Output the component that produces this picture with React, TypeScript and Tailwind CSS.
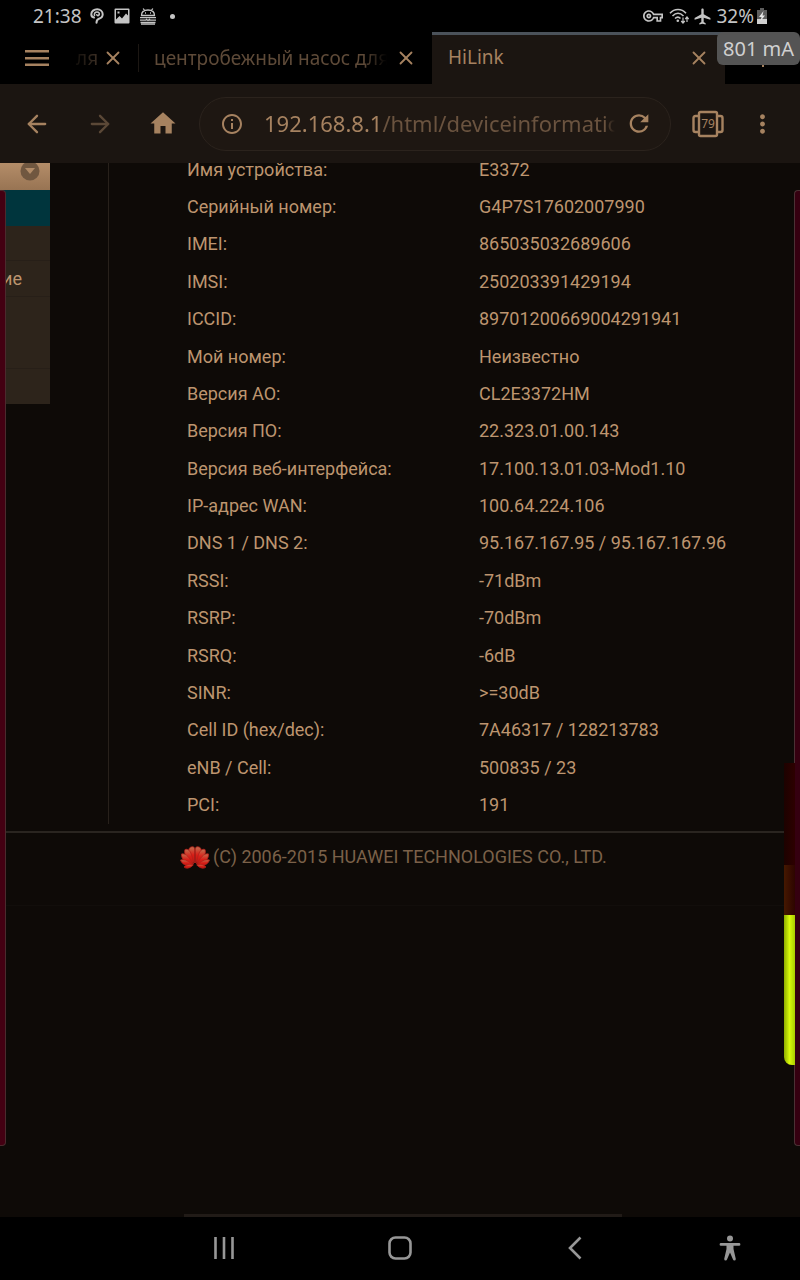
import type { ReactNode } from "react";
import { MdHome, MdRefresh, MdMoreVert, MdOutlineInfo, MdAirplanemodeActive, MdOutlineVpnKey } from "react-icons/md";
import { ArrowLeft, ArrowRight, X } from "lucide-react";

const info = [
  ["Имя устройства:", "E3372"],
  ["Серийный номер:", "G4P7S17602007990"],
  ["IMEI:", "865035032689606"],
  ["IMSI:", "250203391429194"],
  ["ICCID:", "89701200669004291941"],
  ["Мой номер:", "Неизвестно"],
  ["Версия АО:", "CL2E3372HM"],
  ["Версия ПО:", "22.323.01.00.143"],
  ["Версия веб-интерфейса:", "17.100.13.01.03-Mod1.10"],
  ["IP-адрес WAN:", "100.64.224.106"],
  ["DNS 1 / DNS 2:", "95.167.167.95 / 95.167.167.96"],
  ["RSSI:", "-71dBm"],
  ["RSRP:", "-70dBm"],
  ["RSRQ:", "-6dB"],
  ["SINR:", ">=30dB"],
  ["Cell ID (hex/dec):", "7A46317 / 128213783"],
  ["eNB / Cell:", "500835 / 23"],
  ["PCI:", "191"],
];

function IconButton({ label, className = "", children }: { label: string; className?: string; children: ReactNode }) {
  return (
    <button type="button" aria-label={label} className={`flex shrink-0 items-center justify-center ${className}`}>
      {children}
    </button>
  );
}

function StatusBar() {
  return (
    <header className="flex h-8 shrink-0 items-center justify-between pl-[33px] pr-8 text-[#c4c4c4]">
      <div className="flex items-center">
        <span className="w-[57px] text-[19px]">21:38</span>
        <svg className="mr-2.5 h-4 w-3.5" viewBox="0 0 14 16" fill="none" stroke="currentColor" strokeWidth="2" strokeLinecap="round">
          <path d="M6.500 14.800C6.500 12.500 7 11.500 9 10.800C11.500 10 12.700 8.300 12.700 6.300C12.700 3.300 10.300 1.200 7.200 1.200C4 1.200 1.300 3.300 1.300 6.200C1.300 8 2.300 9.200 4 9.500" />
          <path d="M4.500 7.500C4 5.500 5 4 7 4C9 4 9.700 5.500 9.200 6.700C8.700 7.800 7.300 8 6.800 6.800" strokeWidth="1.600" />
        </svg>
        <svg className="mr-2.5 h-4 w-4" viewBox="0 0 16 16" fill="currentColor">
          <path fillRule="evenodd" d="M1.500 0.500h13a1 1 0 0 1 1 1v13a1 1 0 0 1-1 1h-13a1 1 0 0 1-1-1v-13a1 1 0 0 1 1-1ZM2 11.500L5.500 8l2.500 2.500L12 5.500l2 2V2H2ZM3.500 3.500h2v2h-2Z" />
        </svg>
        <svg className="mr-3.5 h-[17px] w-4" viewBox="0 0 16 17" fill="none" stroke="currentColor" strokeWidth="1.300">
          <path d="M1.500 7.500C1.500 3.800 4.500 2 8 2s6.500 1.800 6.500 5.500ZM4.500 2.500L3.200 0.500M11.500 2.500L12.800 0.500M5 5h1M10 5h1M0 9.700h16M0 12.200h6.500M9 12.200h7M6 11l2 1.500l2-1.500M0.500 14.500h15M1 16.200h14" />
        </svg>
        <span className="size-[5px] rounded-full bg-[#c4c4c4]" />
      </div>
      <div className="flex items-center">
        <MdOutlineVpnKey className="mr-1.5 size-5" />
        <svg className="mr-1 h-4 w-5" viewBox="0 0 20 16" fill="none" stroke="currentColor" strokeWidth="1.600">
          <path d="M1 5.200C5.500 0.300 12.500 0.300 17 5.200M3.500 8C7 4.500 11 4.500 14.500 8M6 10.500C7.700 9 10 9 11.500 10.500" />
          <circle cx="8.800" cy="12.800" r="1.300" fill="currentColor" stroke="none" />
          <path d="M14 9.500v5M12.200 13l1.800 2l1.800-2M18 14V9M16.300 11L18 9l1.700 2" strokeWidth="1.200" />
        </svg>
        <MdAirplanemodeActive className="mr-1 size-[19px]" />
        <span className="mr-0.5 text-[19px]">32%</span>
        <svg className="h-4 w-3" viewBox="0 0 12 16">
          <path d="M4 0h4v2h3v14H1V2h3Z" fill="#5d5d5d" />
          <path d="M1 11h10v5H1Z" fill="#d0d0d0" />
          <path d="M7.500 3L3 9h2.500L4.500 13L9 7.500H6.500Z" fill="#e6e6e6" />
        </svg>
      </div>
    </header>
  );
}

function TabStrip() {
  return (
    <nav className="relative flex h-[52px] shrink-0 items-center text-[19px] text-[#a68260]">
      <IconButton label="Меню" className="ml-[22px] w-[30px]">
        <svg className="h-5 w-6" viewBox="0 0 24 20" fill="currentColor">
          <path d="M0 2h24v2.500H0ZM0 9h24v2.500H0ZM0 15.500h24V18H0Z" />
        </svg>
      </IconButton>
      <div className="ml-6 flex h-7 w-[62px] shrink-0 items-center justify-between pr-3.5">
        <span className="bg-linear-to-r from-[#14100c] to-[#3d3025] bg-clip-text text-transparent">ля</span>
        <IconButton label="Закрыть">
          <X className="size-[22px]" strokeWidth={2} />
        </IconButton>
      </div>
      <div className="flex h-7 min-w-0 flex-1 items-center border-l border-[#1c1713] pl-[15px]">
        <span className="min-w-0 flex-1 overflow-hidden whitespace-nowrap text-[#5e4a38] mask-r-from-90%">
          центробежный насос для
        </span>
        <IconButton label="Закрыть" className="ml-2 mr-[15px]">
          <X className="size-[22px]" strokeWidth={2} />
        </IconButton>
      </div>
      <div className="flex h-full w-[293px] shrink-0 items-center justify-between border-t-[3px] border-[#4b525a] bg-[#1b1511] pb-1 pl-4 pr-[15px]">
        <span>HiLink</span>
        <IconButton label="Закрыть">
          <X className="size-[22px]" strokeWidth={2} />
        </IconButton>
      </div>
      <IconButton label="Новая вкладка" className="w-[75px] pt-1">
        <span className="h-3.5 w-0.5 bg-[#a68260]" />
      </IconButton>
      <div className="absolute right-0 top-0 rounded-md bg-[#545454] px-1.5 text-xl leading-[33px] text-[#d0d0d0]">801 mA</div>
    </nav>
  );
}

function Toolbar() {
  return (
    <div className="flex h-[79px] shrink-0 items-center bg-[#1b1511] px-[23px] text-[#a68260]">
      <IconButton label="Назад" className="w-7">
        <ArrowLeft className="size-8" />
      </IconButton>
      <IconButton label="Вперёд" className="ml-[35px] w-7 text-[#5b4837]">
        <ArrowRight className="size-8" />
      </IconButton>
      <IconButton label="Домой" className="ml-[34px] w-[30px]">
        <MdHome className="size-[31px]" />
      </IconButton>
      <div className="ml-[21px] flex h-[54px] min-w-0 flex-1 items-center rounded-full border border-[#2b231d] bg-[#1e1712] pl-5 pr-[17px]">
        <MdOutlineInfo className="size-6 shrink-0" />
        <div
          role="textbox"
          aria-label="Адрес"
          className="ml-5 min-w-0 flex-1 overflow-hidden whitespace-nowrap text-[22px] text-[#6a533f] mask-r-from-97%"
        >
          <span className="text-[#a68260]">192.168.8.1</span>/html/deviceinformation.html
        </div>
        <IconButton label="Обновить" className="ml-2.5 w-7">
          <MdRefresh className="size-[31px]" />
        </IconButton>
      </div>
      <IconButton label="Вкладки" className="ml-[21px]">
        <svg className="h-7 w-8" viewBox="0 0 32 28" fill="none" stroke="currentColor" strokeWidth="2.400">
          <rect x="7" y="2" width="18" height="24" rx="1.500" />
          <path d="M7 6H3.500Q1.500 6 1.500 8v12q0 2 2 2H7M25 6h3.500q2 0 2 2v12q0 2-2 2H25" />
          <text x="16" y="18" textAnchor="middle" fontSize="12" fill="currentColor" stroke="none">79</text>
        </svg>
      </IconButton>
      <IconButton label="Ещё" className="ml-6 w-[29px]">
        <MdMoreVert className="size-8" />
      </IconButton>
    </div>
  );
}

function Sidebar() {
  return (
    <aside className="w-[50px] shrink-0 overflow-hidden text-lg leading-9 text-[#bd956f]">
      <div className="flex h-[27px] items-start justify-end bg-linear-to-b from-[#b48d69] to-[#987453] pr-2.5">
        <svg className="h-[18px] w-5" viewBox="0 0 20 18">
          <circle cx="10" cy="8" r="9.500" fill="#705740" />
          <path d="M5 5h10l-5 6Z" fill="#b18b68" />
        </svg>
      </div>
      <div className="h-9 bg-[#00353d]" />
      <div className="divide-y divide-[#271f18] bg-[#2d241b]">
        <div className="h-[35px]" />
        <a href="#" className="block h-9 pl-0.5">ие</a>
        <div className="h-[72px]" />
        <div className="h-[35px]" />
      </div>
    </aside>
  );
}

function HuaweiLogo() {
  return (
    <svg className="h-6 w-[30px] shrink-0" viewBox="0 0 30 24">
      <defs>
        <linearGradient id="petal" x1="0" y1="0" x2="0" y2="1">
          <stop offset="0" stopColor="#c07050" />
          <stop offset="0.500" stopColor="#d91f18" />
          <stop offset="1" stopColor="#b8160f" />
        </linearGradient>
      </defs>
      <g fill="url(#petal)" stroke="#b3201a" strokeWidth="0.800">
        <path d="M14.500 18C8.500 11 7.500 5 10 2.500C13 0.800 15 2 14.800 5Z" />
        <path d="M15.500 18C21.500 11 22.500 5 20 2.500C17 0.800 15 2 15.200 5Z" />
        <path d="M13.500 19C6 13 3.500 8 5 4.500C9.500 3 12 8 13.500 19Z" />
        <path d="M16.500 19C24 13 26.500 8 25 4.500C20.500 3 18 8 16.500 19Z" />
        <path d="M13 20C5.500 18.500 1 14 1.500 9C6.500 8 10 13 13 20Z" />
        <path d="M17 20C24.500 18.500 29 14 28.500 9C23.500 8 20 13 17 20Z" />
        <path d="M13 20.500C7 22 2 19.500 0.500 15C5 14 9 16 13 20.500Z" />
        <path d="M17 20.500C23 22 28 19.500 29.500 15C25 14 21 16 17 20.500Z" />
        <path d="M13 20C10 23.500 6 24 4 22C7 19 10 19 13 20Z" />
        <path d="M17 20C20 23.500 24 24 26 22C23 19 20 19 17 20Z" />
      </g>
    </svg>
  );
}

function DeviceInfo() {
  return (
    <main className="relative flex-1 overflow-hidden bg-[#0e0a07] font-[Roboto,sans-serif] text-[#bd956f]">
      <div className="flex items-start">
        <Sidebar />
        <section className="ml-[58px] min-w-0 flex-1 overflow-hidden border-l border-[#28211b] pl-[78px]">
          <table className="-mt-3 h-[673px] w-full table-fixed text-left text-lg leading-6">
            <tbody>
              {info.map(([label, value]) => (
                <tr key={label}>
                  <th scope="row" className="w-[292px] p-0 font-normal">{label}</th>
                  <td className="whitespace-nowrap p-0">{value}</td>
                </tr>
              ))}
            </tbody>
          </table>
        </section>
      </div>
      <footer className="mt-[7px] flex h-[75px] items-start gap-[3px] border-b border-t-2 border-b-[#120e0b] border-t-[#2a2520] pl-[180px] pt-3 text-lg leading-6 text-[#7b6149]">
        <HuaweiLogo />
        <span>(C) 2006-2015 HUAWEI TECHNOLOGIES CO., LTD.</span>
      </footer>

      {/* edge panels */}
      <div className="absolute bottom-[71px] left-0 top-[27px] w-1.5 rounded-r-sm border border-l-0 border-[#4b2a2d] bg-[#430012]" />
      <div className="absolute bottom-[71px] right-0 top-[27px] w-1.5 rounded-l-sm border border-r-0 border-[#4b3134] bg-[#350010]" />
      <div className="absolute bottom-[152px] right-[5px] flex h-[302px] w-[11px] flex-col overflow-hidden rounded-bl-lg">
        <div className="h-[102px] bg-linear-to-r from-[#1d0200] to-[#2d0000]" />
        <div className="h-[50px] bg-linear-to-r from-[#451800] to-[#2d0500]" />
        <div className="flex-1 bg-linear-to-r from-[#8fae00] via-[#d9fa0a] to-[#a9cb00]" />
      </div>
      {/* horizontal scroll position */}
      <div className="absolute bottom-0 left-[23%] right-[178px] h-[3px] bg-[#211b17]" />
    </main>
  );
}

function SystemNav() {
  return (
    <nav className="flex h-[63px] shrink-0 items-center justify-between bg-black pb-0.5 pl-[212px] pr-[59px] text-[#979797]">
      <IconButton label="Недавние">
        <svg className="h-6 w-6" viewBox="0 0 24 24" stroke="currentColor" strokeWidth="2.600">
          <path d="M3.500 1v22M12 1v22M20.500 1v22" />
        </svg>
      </IconButton>
      <IconButton label="Главный экран">
        <svg className="h-6 w-6" viewBox="0 0 24 24" fill="none" stroke="currentColor" strokeWidth="2.600">
          <rect x="1.500" y="1.500" width="21" height="21" rx="6" />
        </svg>
      </IconButton>
      <IconButton label="Назад">
        <svg className="h-6 w-6" viewBox="0 0 24 24" fill="none" stroke="currentColor" strokeWidth="2.600">
          <path d="M17.500 1.500L7 12l10.500 10.500" />
        </svg>
      </IconButton>
      <IconButton label="Специальные возможности" className="-ml-5">
        <svg className="h-[26px] w-[22px]" viewBox="0 0 22 26" fill="currentColor">
          <circle cx="11" cy="3.500" r="3" />
          <path d="M2 8h18a1.200 1.200 0 0 1 0 2.800h-5.500V14l2.300 10q0 1.500-1.500 1.500q-1 0-1.300-1L11 17.500L8 24.500q-.3 1-1.300 1q-1.500 0-1.500-1.500L7.500 14v-3.200H2A1.200 1.200 0 0 1 2 8Z" />
        </svg>
      </IconButton>
    </nav>
  );
}

export default function App() {
  return (
    <div className="flex min-h-screen flex-col bg-black font-['Noto_Sans',sans-serif]">
      <StatusBar />
      <TabStrip />
      <Toolbar />
      <DeviceInfo />
      <SystemNav />
    </div>
  );
}
